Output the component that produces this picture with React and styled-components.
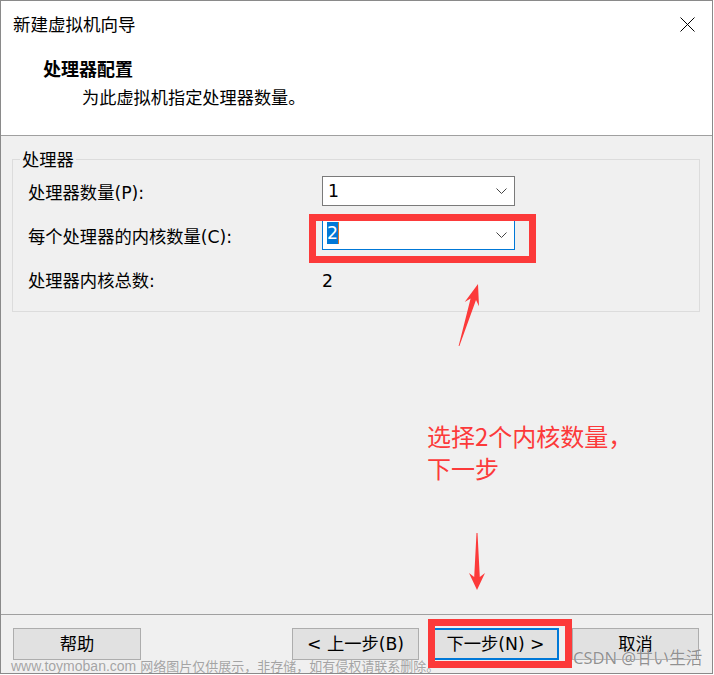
import React from 'react';
import styled, { createGlobalStyle } from 'styled-components';

const CJK = `"Noto Sans CJK SC", sans-serif`;
const UI = `"DejaVu Sans", "Noto Sans CJK SC", sans-serif`;

const Global = createGlobalStyle`
  html, body { margin: 0; padding: 0; background: #fff; }
  body { font-family: ${UI}; }
`;

const Page = styled.div`
  position: relative;
  width: 714px;
  height: 675px;
  overflow: hidden;
  background: #fff;
`;

const Window = styled.div`
  width: 713px;
  height: 674px;
  box-sizing: border-box;
  border: 1px solid #8a8a8a;
  display: flex;
  flex-direction: column;
  background: #f0f0f0;
  color: #000;
  font-family: ${UI};
`;

const Header = styled.header`
  height: 135px;
  box-sizing: border-box;
  background: #fff;
  border-bottom: 1px solid #a0a0a0;
  display: flex;
  flex-direction: column;
`;

const TitleBar = styled.div`
  height: 46px;
  display: flex;
  align-items: center;
  justify-content: space-between;
  padding: 0 17px 0 12px;
`;

const Title = styled.div`
  font-family: ${CJK};
  font-size: 17.5px;
  line-height: 24px;
`;

const CloseIcon = styled.svg`
  width: 15px;
  height: 15px;
  display: block;
`;

const HeaderBody = styled.div`
  padding: 9px 0 0 42px;
  display: flex;
  flex-direction: column;
  gap: 5px;
`;

const Heading = styled.div`
  font-family: ${CJK};
  font-weight: 700;
  font-size: 18px;
  line-height: 24px;
`;

const SubHeading = styled.div`
  font-family: ${CJK};
  font-size: 17.2px;
  line-height: 24px;
  padding-left: 39px;
`;

const Body = styled.main`
  flex: 1;
  padding: 13px 0 0 11px;
`;

const Group = styled.fieldset`
  margin: 0;
  width: 688px;
  min-width: 0;
  box-sizing: border-box;
  border: 1px solid #dcdcdc;
  padding: 7px 0 15px 0;
`;

const Legend = styled.legend`
  margin-left: 7px;
  padding: 0 2px;
  font-family: ${CJK};
  font-size: 17.3px;
  line-height: 20px;
`;

const Row = styled.div`
  display: flex;
  align-items: center;
  height: 30px;
  margin-bottom: ${p => p.$gap || 0}px;
`;

const Label = styled.div`
  width: 309px;
  flex: none;
  box-sizing: border-box;
  padding-left: 15px;
  padding-top: ${p => (p.$shift ? 4 : 0)}px;
  font-size: 17.3px;
  line-height: 26px;
  white-space: nowrap;
`;

const Value = styled.div`
  font-size: 17.3px;
  line-height: 26px;
`;

const Combo = styled.div`
  width: 193px;
  height: 30px;
  flex: none;
  box-sizing: border-box;
  background: #fff;
  border: 1px solid ${p => (p.$focused ? '#0078d7' : '#7a7a7a')};
  display: flex;
  align-items: center;
  padding: 0 7px 0 ${p => (p.$focused ? 4 : 5)}px;
  font-size: 17.3px;
`;

const ComboText = styled.span`
  flex: 1;
  line-height: 22px;
`;

const Selection = styled.span`
  display: inline-block;
  align-self: flex-start;
  margin-top: 1px;
  height: 22px;
  line-height: 22px;
  background: #0078d7;
  color: #fff;
  padding: 0;
`;

const Caret = styled.span`
  display: inline-block;
  align-self: flex-start;
  margin-top: 1px;
  width: 1px;
  height: 22px;
  background: #d2742c;
`;

const Spacer = styled.span`
  flex: 1;
`;

const Chevron = styled.svg`
  width: 11px;
  height: 6px;
  display: block;
`;

const Footer = styled.footer`
  height: 59px;
  box-sizing: border-box;
  border-top: 1px solid #a0a0a0;
  padding: 13px 13px 0 12px;
  display: flex;
  align-items: flex-start;
`;

const ButtonGroup = styled.div`
  margin-left: auto;
  display: flex;
  gap: 13px;
`;

const Button = styled.button`
  width: ${p => p.$w || 127}px;
  height: 32px;
  box-sizing: border-box;
  margin: 0;
  padding: 0;
  background: #e1e1e1;
  border: ${p => (p.$default ? '2px solid #0078d7' : '1px solid #adadad')};
  font-family: ${UI};
  font-size: 17.3px;
  line-height: 22px;
  color: #000;
  white-space: nowrap;
`;

/* ---------- annotation overlays ---------- */

const RedBox = styled.div`
  position: absolute;
  box-sizing: border-box;
  border: 7px solid #fc3a3a;
  pointer-events: none;
`;

const ArrowLayer = styled.svg`
  position: absolute;
  left: 0;
  top: 0;
  width: 714px;
  height: 675px;
  pointer-events: none;
`;

const Note = styled.div`
  position: absolute;
  left: 427px;
  top: 420px;
  font-family: ${CJK};
  font-size: 24px;
  line-height: 32px;
  color: #fc3a3a;
  white-space: nowrap;
`;

const Watermark = styled.div`
  position: absolute;
  left: 11px;
  top: 657px;
  line-height: 17px;
  color: rgba(150, 150, 150, 0.85);
  white-space: nowrap;
  pointer-events: none;
`;

const WmLatin = styled.span`
  font-family: "Liberation Sans", sans-serif;
  font-size: 14px;
`;

const WmCjk = styled.span`
  font-family: ${CJK};
  font-size: 13px;
`;

const Signature = styled.div`
  position: absolute;
  left: 573px;
  top: 648px;
  font-family: "Noto Sans", ${CJK};
  font-size: 16.5px;
  line-height: 20px;
  color: rgba(110, 110, 110, 0.75);
  text-shadow: 0 0 1px #fff;
  white-space: nowrap;
  pointer-events: none;
`;

const ChevronIcon = () => (
  <Chevron viewBox="0 0 11 6">
    <polyline points="0.5,0.5 5.5,5.5 10.5,0.5" fill="none" stroke="#444" strokeWidth="1" />
  </Chevron>
);

export default function App() {
  return (
    <>
      <Global />
      <Page>
        <Window>
          <Header>
            <TitleBar>
              <Title>新建虚拟机向导</Title>
              <CloseIcon viewBox="0 0 15 15">
                <path d="M0.5 0.5 L14.5 14.5 M14.5 0.5 L0.5 14.5" stroke="#000" strokeWidth="1" fill="none" />
              </CloseIcon>
            </TitleBar>
            <HeaderBody>
              <Heading>处理器配置</Heading>
              <SubHeading>为此虚拟机指定处理器数量。</SubHeading>
            </HeaderBody>
          </Header>

          <Body>
            <Group>
              <Legend>处理器</Legend>
              <Row $gap={14}>
                <Label $shift>处理器数量(P):</Label>
                <Combo>
                  <ComboText>1</ComboText>
                  <ChevronIcon />
                </Combo>
              </Row>
              <Row $gap={16}>
                <Label $shift>每个处理器的内核数量(C):</Label>
                <Combo $focused>
                  <Selection>2</Selection>
                  <Caret />
                  <Spacer />
                  <ChevronIcon />
                </Combo>
              </Row>
              <Row>
                <Label>处理器内核总数:</Label>
                <Value>2</Value>
              </Row>
            </Group>
          </Body>

          <Footer>
            <Button $w={128}>帮助</Button>
            <ButtonGroup>
              <Button>&lt; 上一步(B)</Button>
              <Button $default>下一步(N) &gt;</Button>
              <Button>取消</Button>
            </ButtonGroup>
          </Footer>
        </Window>

        <RedBox style={{ left: 309, top: 214, width: 227, height: 49 }} />
        <RedBox style={{ left: 428, top: 619, width: 144, height: 49 }} />

        <ArrowLayer viewBox="0 0 714 675">
          <polygon
            fill="#fc3a3a"
            points="478,284 479,306.3 476,300.1 459.4,346.1 458.6,345.9 470.6,298.5 464.7,301.9"
          />
          <polygon
            fill="#fc3a3a"
            points="477,590 485,573 479.8,577 477.5,533 476.5,533 474.2,577 469,573"
          />
        </ArrowLayer>

        <Note>
          选择2个内核数量，
          <br />
          下一步
        </Note>

        <Watermark>
          <WmLatin>www.toymoban.com </WmLatin>
          <WmCjk>网络图片仅供展示，非存储，如有侵权请联系删除。</WmCjk>
        </Watermark>
        <Signature>CSDN @甘い生活</Signature>
      </Page>
    </>
  );
}
